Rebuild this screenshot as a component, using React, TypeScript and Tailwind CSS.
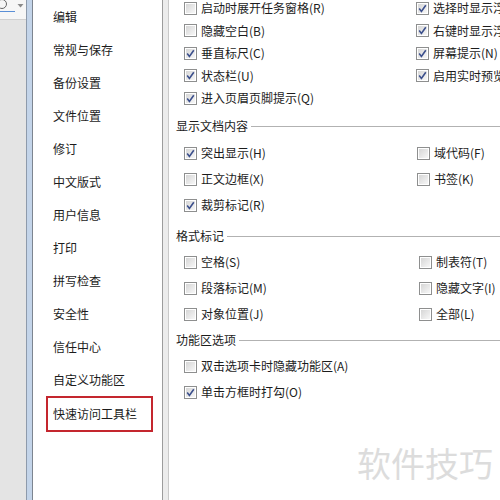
import React from 'react';

const font = { fontFamily: '"Noto Sans CJK SC", "Noto Sans", sans-serif' };

const navItems = [
    '编辑', '常规与保存', '备份设置', '文件位置', '修订', '中文版式', '用户信息',
    '打印', '拼写检查', '安全性', '信任中心', '自定义功能区',
];

const Check: React.FC<{ checked?: boolean }> = ({ checked }) => (
    <span className="w-[13px] h-[13px] shrink-0 border border-[#8e8f8f] bg-white p-px">
        <span className="flex w-full h-full items-center justify-center bg-gradient-to-br from-[#d6d6d6] to-[#f7f7f7]">
            {checked && (
                <svg width="9" height="9" viewBox="0 0 9 9">
                    <path d="M1.2 4.6 L3.4 7.4 L7.8 1.2" fill="none" stroke="#3b4f8c" strokeWidth="1.6" />
                </svg>
            )}
        </span>
    </span>
);

const Option: React.FC<{ label: string; checked?: boolean; h: string }> = ({ label, checked, h }) => (
    <div className={`flex items-center gap-[4px] ${h} whitespace-nowrap`}>
        <Check checked={checked} />
        <span>{label}</span>
    </div>
);

const Header: React.FC<{ title: string; className: string }> = ({ title, className }) => (
    <div className={`flex items-center h-[18px] pl-[7px] ${className}`}>
        <span className="whitespace-nowrap">{title}</span>
        <div className="flex-1 h-px bg-[#b2b2b2] ml-[3px]"></div>
    </div>
);

export default function App() {
    return (
        <div className="relative w-[500px] h-[500px] overflow-hidden bg-white text-[12px] text-[#1c1c1c] flex" style={font}>
            {/* ribbon edge on the far left */}
            <div className="w-[26px] shrink-0 flex flex-col bg-[#e4e4e4]">
                <div className="h-[20px] bg-[#f6f6f6] border-b border-[#d0d0d0] flex items-start">
                    <div className="w-[15px] h-[12px] border-b border-[#5a8fd6] overflow-hidden relative">
                        <div className="w-[10px] h-[10px] rounded-full border border-[#666] -ml-[3px] -mt-[1px]"></div>
                    </div>
                    <svg width="7" height="6" viewBox="0 0 7 6" className="ml-[2px] mt-[3px]">
                        <path d="M0.5 1 L6.5 1 L3.5 4.5 Z" fill="#8a8a8a" />
                    </svg>
                </div>
            </div>
            <div className="w-px bg-[#8d9aab] shrink-0"></div>
            <div className="w-[5px] bg-[#c3d4e9] shrink-0"></div>
            <div className="w-px bg-[#7d8590] shrink-0"></div>

            {/* navigation list */}
            <div className="w-[129px] shrink-0 flex flex-col pt-[0.5px]">
                {navItems.map((item) => (
                    <div key={item} className="h-[33px] ml-[13px] mr-[9px] pl-[5px] border-2 border-transparent flex items-center">
                        {item}
                    </div>
                ))}
                <div className="h-[36px] ml-[13px] mr-[9px] -mt-[1px] pl-[5px] border-2 border-[#c4262e] flex items-center">
                    快速访问工具栏
                </div>
            </div>

            {/* splitter */}
            <div className="w-px bg-[#9c9c9c] shrink-0"></div>
            <div className="w-[5px] bg-[#ececec] shrink-0"></div>
            <div className="w-px bg-[#c9c9c9] shrink-0"></div>

            {/* options */}
            <div className="flex-1 flex flex-col">
                <div className="grid grid-cols-[232px_1fr] pl-[15px] -mt-[3px]">
                    <div className="flex flex-col">
                        <Option h="h-[22.5px]" label="启动时展开任务窗格(R)" />
                        <Option h="h-[22.5px]" label="隐藏空白(B)" />
                        <Option h="h-[22.5px]" label="垂直标尺(C)" checked />
                        <Option h="h-[22.5px]" label="状态栏(U)" checked />
                        <Option h="h-[22.5px]" label="进入页眉页脚提示(Q)" checked />
                    </div>
                    <div className="flex flex-col">
                        <Option h="h-[22.5px]" label="选择时显示浮动工具栏(M)" checked />
                        <Option h="h-[22.5px]" label="右键时显示浮动工具栏(Z)" checked />
                        <Option h="h-[22.5px]" label="屏幕提示(N)" checked />
                        <Option h="h-[22.5px]" label="启用实时预览(V)" checked />
                    </div>
                </div>

                <Header title="显示文档内容" className="mt-[7.5px]" />
                <div className="grid grid-cols-[233px_1fr] pl-[15px] mt-[5px]">
                    <div className="flex flex-col">
                        <Option h="h-[26px]" label="突出显示(H)" checked />
                        <Option h="h-[26px]" label="正文边框(X)" />
                        <Option h="h-[26px]" label="裁剪标记(R)" checked />
                    </div>
                    <div className="flex flex-col">
                        <Option h="h-[26px]" label="域代码(F)" />
                        <Option h="h-[26px]" label="书签(K)" />
                    </div>
                </div>

                <Header title="格式标记" className="mt-[9px]" />
                <div className="grid grid-cols-[235px_1fr] pl-[15px] mt-[4px]">
                    <div className="flex flex-col">
                        <Option h="h-[26px]" label="空格(S)" />
                        <Option h="h-[26px]" label="段落标记(M)" />
                        <Option h="h-[26px]" label="对象位置(J)" />
                    </div>
                    <div className="flex flex-col">
                        <Option h="h-[26px]" label="制表符(T)" />
                        <Option h="h-[26px]" label="隐藏文字(I)" />
                        <Option h="h-[26px]" label="全部(L)" />
                    </div>
                </div>

                <Header title="功能区选项" className="mt-[4px]" />
                <div className="flex flex-col pl-[15px] mt-[4px]">
                    <Option h="h-[26px]" label="双击选项卡时隐藏功能区(A)" />
                    <Option h="h-[26px]" label="单击方框时打勾(O)" checked />
                </div>
            </div>

            {/* watermark */}
            <div className="absolute left-[357px] top-[446px] text-[34px] leading-none text-[#dcdcdc] whitespace-nowrap">
                软件技巧
            </div>
        </div>
    );
}
